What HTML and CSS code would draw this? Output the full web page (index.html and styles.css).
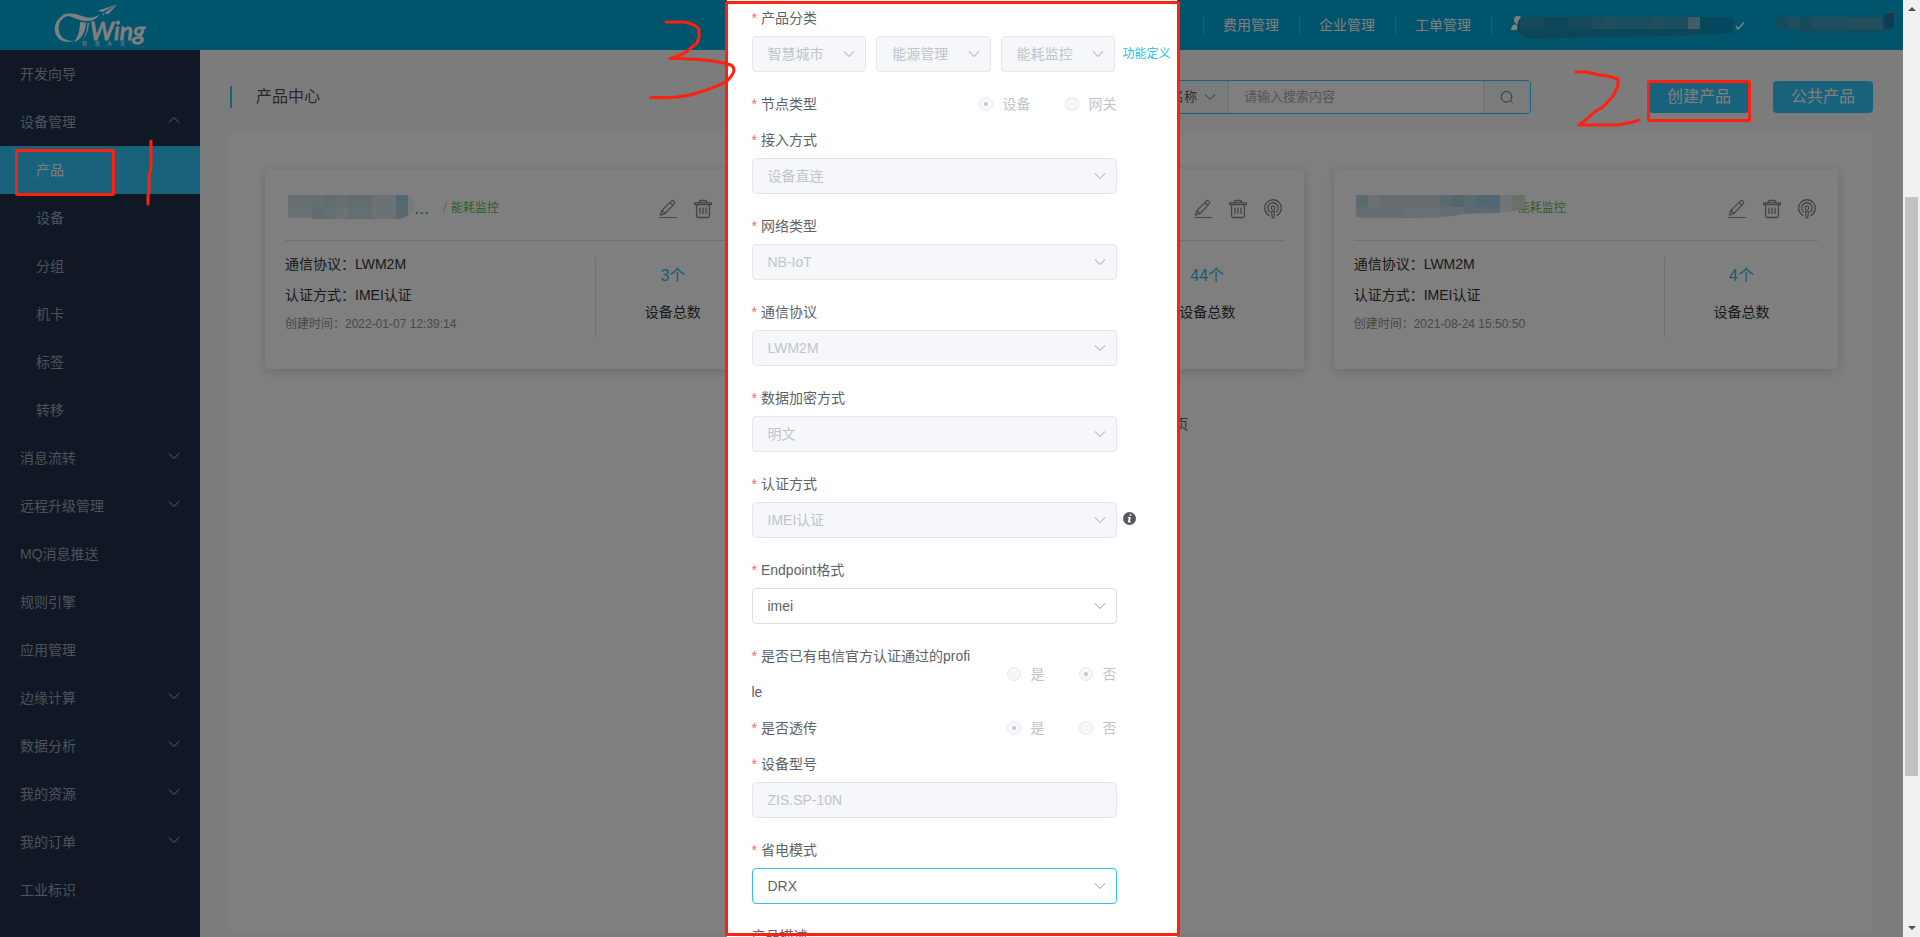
FILE: index.html
```
<!DOCTYPE html>
<html lang="zh-CN">
<head>
<meta charset="utf-8">
<title>产品中心</title>
<link rel="stylesheet" href="styles.css">
</head>
<body>
<svg class="sprite" aria-hidden="true">
  <symbol id="down" viewBox="0 0 12 12"><path d="M1 3.500 6 8.500 11 3.500" fill="none" stroke="currentColor" stroke-width="1.200"/></symbol>
  <symbol id="up" viewBox="0 0 12 12"><path d="M1 8.500 6 3.500 11 8.500" fill="none" stroke="currentColor" stroke-width="1.200"/></symbol>
  <symbol id="edit" viewBox="0 0 18 19"><path d="M1.500 15.500 2.800 11 12.600 1.400Q13.400.6 14.400 1.400L15.400 2.300Q16.200 3.200 15.400 4.100L6 14ZM2.800 11 6 14M11 3 14 5.800M.3 18H17.700" fill="none" stroke="currentColor" stroke-width="1.200"/></symbol>
  <symbol id="trash" viewBox="0 0 18 19"><path d="M.5 3.400H17.500V5.200H.5ZM5 3.200Q5.200 1 7 1H11Q12.800 1 13 3.200M2.600 5.400V16.500Q2.600 18 4 18H14Q15.400 18 15.400 16.500V5.400M6 8V14.500M9 8V14.500M12 8V14.500" fill="none" stroke="currentColor" stroke-width="1.300"/></symbol>
  <symbol id="cast" viewBox="0 0 18 20"><path d="M5.500 16.600A8.300 8.300 0 1 1 12.500 16.600M6 13.200A5.200 5.200 0 1 1 12 13.200" fill="none" stroke="currentColor" stroke-width="1.300"/><circle cx="9" cy="9" r="1.800" fill="none" stroke="currentColor" stroke-width="1.200"/><path d="M7.500 12.500H10.500L9.900 18Q9 20.500 8.100 18Z" fill="none" stroke="currentColor" stroke-width="1.200"/></symbol>
</svg>

<div class="window">
  <div class="app">
    <header class="topbar">
      <a class="logo" href="#" aria-label="CTWing">
        <svg width="110" height="50" viewBox="0 0 110 50">
          <path d="M38 17.500C31 12 20 12.500 14.500 19C8 27 10.500 37 17.500 40.500C22 42.500 27.500 42.300 31 40.500C24 41.500 18.500 39.500 16 34C13 27 15 20.500 21 17C25 15 29.500 15.500 34 18Z" fill="#fff"/>
          <path d="M17 15.500C26 11.500 33 14.500 41 17C47 18.500 51 17.500 56 14.500C52 19.500 47 21.500 41 21C34 20.500 27 14.500 17 15.500Z" fill="#fff"/>
          <path d="M36 22 42 22.500C41.500 32 38 39 30 42.500C34 37 36 30 36 22ZM43.500 22.700H45C44.500 31 42 36.500 38 40.500C42 35 43.200 29 43.500 22.700Z" fill="#fff"/>
          <path d="M73 4.500 53.500 10.800 58.500 12ZM73 4.500 60.500 12.800 64 14.500ZM58.700 12.700 59 15.700 61 13.900Z" fill="#fff"/>
          <text class="logo-word" x="46" y="40">Wing</text>
          <text class="logo-note" x="38 51 63 76" y="45">智联未来</text>
        </svg>
      </a>
      <nav class="topnav">
        <a href="#">费用管理</a>
        <a href="#">企业管理</a>
        <a href="#">工单管理</a>
      </nav>
      <svg class="account" width="385" height="30" viewBox="0 0 385 30">
        <g transform="translate(-4 3)">
          <g fill="#fff"><circle cx="12" cy="7" r="4"/><path d="M5 17Q5 12 9 11.500H16V17Z"/></g>
          <path d="M16 4H226V19Q214 22 190 22L120 24Q60 24 30 26Q14 26 11 16Q11 6 16 4Z" fill="#1a8cb2"/>
          <g fill="#4fa4c0"><path d="M14 4H38V16H14ZM62 4H86V16H62Z" opacity=".35"/><path d="M86 4H182V16H86Z" opacity=".6"/><path d="M182 4H194V16H182Z" fill="#80b8cc"/><path d="M98 4H110V16H98ZM146 4H158V16H146Z" opacity=".25"/></g>
          <path d="M196 4H208V22H196ZM208 4H228V20H208Z" fill="#008fba" opacity=".6"/>
          <path d="M230 13 232 16 238 9.500" fill="none" stroke="#fff" stroke-width="1.500"/>
          <path d="M270 4H388V13Q386 17 380 18V20H294V16H270Z" fill="#2896ba"/>
          <path d="M282 4H294V16H282ZM306 4H342V16H306Z" fill="#60a8c0" opacity=".4"/>
          <path d="M342 4H376V16H342Z" fill="#60a8c0" opacity=".55"/>
          <path d="M378 1H388V14Q386 16 378 16Z" fill="#1c7ca6"/><path d="M383 0H388V5Z" fill="#c03a58"/>
        </g>
      </svg>
    </header>

    <div class="columns">
      <aside class="sidebar">
        <a href="#">开发向导</a>
        <a href="#">设备管理<svg><use href="#up"/></svg></a>
        <a href="#" class="sub active">产品</a>
        <a href="#" class="sub">设备</a>
        <a href="#" class="sub">分组</a>
        <a href="#" class="sub">机卡</a>
        <a href="#" class="sub">标签</a>
        <a href="#" class="sub">转移</a>
        <a href="#">消息流转<svg><use href="#down"/></svg></a>
        <a href="#">远程升级管理<svg><use href="#down"/></svg></a>
        <a href="#">MQ消息推送</a>
        <a href="#">规则引擎</a>
        <a href="#">应用管理</a>
        <a href="#">边缘计算<svg><use href="#down"/></svg></a>
        <a href="#">数据分析<svg><use href="#down"/></svg></a>
        <a href="#">我的资源<svg><use href="#down"/></svg></a>
        <a href="#">我的订单<svg><use href="#down"/></svg></a>
        <a href="#">工业标识</a>
      </aside>

      <main class="main">
        <div class="toolbar">
          <h1>产品中心</h1>
          <div class="search">
            <button type="button" class="search-type">产品名称<svg><use href="#down"/></svg></button>
            <input type="text" placeholder="请输入搜索内容" aria-label="搜索内容">
            <button type="button" class="search-go" aria-label="搜索"><svg viewBox="0 0 14 14"><circle cx="6.500" cy="6.800" r="5.300" fill="none" stroke="currentColor"/><path d="M10.300 10.500 12.800 12.800" fill="none" stroke="currentColor"/></svg></button>
          </div>
          <button type="button" class="primary">创建产品</button>
          <button type="button" class="primary">公共产品</button>
        </div>

        <section class="panel">
          <div class="cards">
            <article class="card">
              <div class="card-head">
                <svg class="mosaic" width="132" height="26" viewBox="0 0 132 26">
                  <path d="M120 0Q130 6 126 16Q122 22 114 22H100V0Z" fill="#e6ecee" opacity=".6"/>
                  <path d="M0 0H120V20Q116 24 108 24H24V23H0Z" fill="#d6e3ea"/>
                  <path d="M0 0H12V12H0ZM36 12H48V24H36Z" fill="#c8dee8"/>
                  <path d="M12 0H36V12H12ZM48 0H60V12H48ZM60 12H84V24H60Z" fill="#cbdde6"/>
                  <path d="M36 0H48V12H36ZM60 0H84V12H60ZM24 12H36V24H24Z" fill="#c2d7e0"/>
                  <path d="M108 0H120V12H108Z" fill="#a6d2e6"/><path d="M108 12H120V20Q116 24 108 24Z" fill="#b8d0da"/>
                </svg>
                <span class="dots">...</span><span class="slash">/</span><span class="tag">能耗监控</span>
                <div class="tools"><button type="button" aria-label="编辑"><svg><use href="#edit"/></svg></button><button type="button" aria-label="删除"><svg><use href="#trash"/></svg></button><button type="button" aria-label="订阅"><svg><use href="#cast"/></svg></button></div>
              </div>
              <div class="card-body">
                <div class="facts"><p>通信协议：LWM2M</p><p>认证方式：IMEI认证</p><p class="time">创建时间：2022-01-07 12:39:14</p></div>
                <div class="total"><b>3个</b><span>设备总数</span></div>
              </div>
            </article>
            <article class="card">
              <div class="card-head">
                <div class="tools"><button type="button" aria-label="编辑"><svg><use href="#edit"/></svg></button><button type="button" aria-label="删除"><svg><use href="#trash"/></svg></button><button type="button" aria-label="订阅"><svg><use href="#cast"/></svg></button></div>
              </div>
              <div class="card-body">
                <div class="facts"></div>
                <div class="total"><b>44个</b><span>设备总数</span></div>
              </div>
            </article>
            <article class="card">
              <div class="card-head">
                <svg class="mosaic wide" width="170" height="26" viewBox="0 0 170 26">
                  <path d="M0 0H144V18L108 19Q90 23 60 23H6Q0 23 0 20Z" fill="#cddbe4"/>
                  <path d="M12 0H24V12H12ZM48 12H84V22H48Z" fill="#d4e0e8"/>
                  <path d="M0 0H12V12H0ZM84 0H96V12H84ZM108 12H144V18H108Z" fill="#b8d2de"/>
                  <path d="M96 0H108V12H96ZM120 0H132V12H120Z" fill="#a4ccda"/>
                  <path d="M108 0H120V12H108Z" fill="#b4d4e0"/>
                  <path d="M132 0H144V12H132Z" fill="#a0d0e6"/>
                  <path d="M144 0H156V17H144Z" fill="#e6e9eb"/>
                  <path d="M156 0H169V12Q166 16 156 16Z" fill="#d6e0d2"/>
                </svg>
                <span class="tag">能耗监控</span>
                <div class="tools"><button type="button" aria-label="编辑"><svg><use href="#edit"/></svg></button><button type="button" aria-label="删除"><svg><use href="#trash"/></svg></button><button type="button" aria-label="订阅"><svg><use href="#cast"/></svg></button></div>
              </div>
              <div class="card-body">
                <div class="facts"><p>通信协议：LWM2M</p><p>认证方式：IMEI认证</p><p class="time">创建时间：2021-08-24 15:50:50</p></div>
                <div class="total"><b>4个</b><span>设备总数</span></div>
              </div>
            </article>
          </div>
          <div class="pager">页</div>
        </section>
      </main>
    </div>

    <div class="mask">
      <form class="dialog">
        <fieldset class="field">
          <legend class="label req">产品分类</legend>
          <div class="triple">
            <div class="select"><select disabled aria-label="一级分类"><option>智慧城市</option></select><svg><use href="#down"/></svg></div>
            <div class="select"><select disabled aria-label="二级分类"><option>能源管理</option></select><svg><use href="#down"/></svg></div>
            <div class="select"><select disabled aria-label="三级分类"><option>能耗监控</option></select><svg><use href="#down"/></svg></div>
            <a class="aside" href="#">功能定义</a>
          </div>
        </fieldset>
        <div class="inline" role="radiogroup" aria-labelledby="node">
          <span class="label req" id="node">节点类型</span>
          <div class="radios"><label><input type="radio" name="node" checked disabled>设备</label><label><input type="radio" name="node" disabled>网关</label></div>
        </div>
        <div class="field">
          <label class="label req" for="access">接入方式</label>
          <div class="select"><select id="access" disabled><option>设备直连</option></select><svg><use href="#down"/></svg></div>
        </div>
        <div class="field">
          <label class="label req" for="net">网络类型</label>
          <div class="select"><select id="net" disabled><option>NB-IoT</option></select><svg><use href="#down"/></svg></div>
        </div>
        <div class="field">
          <label class="label req" for="proto">通信协议</label>
          <div class="select"><select id="proto" disabled><option>LWM2M</option></select><svg><use href="#down"/></svg></div>
        </div>
        <div class="field">
          <label class="label req" for="crypt">数据加密方式</label>
          <div class="select"><select id="crypt" disabled><option>明文</option></select><svg><use href="#down"/></svg></div>
        </div>
        <div class="field">
          <label class="label req" for="auth">认证方式</label>
          <div class="select"><select id="auth" disabled><option>IMEI认证</option></select><svg><use href="#down"/></svg>
            <svg class="aside info" viewBox="0 0 13 13"><circle cx="6.500" cy="6.500" r="6.500" fill="#55585e"/><path d="M6.800 2.200H8.400L8.100 3.800H6.500ZM5 5H7.800L6.900 9.500H8L7.800 10.500H4.800L5.700 6H4.800Z" fill="#fff"/></svg>
          </div>
        </div>
        <div class="field">
          <label class="label req" for="endpoint">Endpoint格式</label>
          <div class="select"><select id="endpoint"><option>imei</option></select><svg><use href="#down"/></svg></div>
        </div>
        <div class="inline" role="radiogroup" aria-labelledby="profile">
          <span class="label req" id="profile">是否已有电信官方认证通过的profile</span>
          <div class="radios"><label><input type="radio" name="profile" disabled>是</label><label><input type="radio" name="profile" checked disabled>否</label></div>
        </div>
        <div class="inline" role="radiogroup" aria-labelledby="pass">
          <span class="label req" id="pass">是否透传</span>
          <div class="radios"><label><input type="radio" name="pass" checked disabled>是</label><label><input type="radio" name="pass" disabled>否</label></div>
        </div>
        <div class="field">
          <label class="label req" for="model">设备型号</label>
          <input class="text" id="model" type="text" value="ZIS.SP-10N" disabled>
        </div>
        <div class="field">
          <label class="label req" for="power">省电模式</label>
          <div class="select"><select id="power" class="current"><option>DRX</option></select><svg><use href="#down"/></svg></div>
        </div>
        <div class="field">
          <label class="label" for="desc">产品描述</label>
          <textarea class="text" id="desc"></textarea>
        </div>
      </form>
    </div>
  </div>
  <div class="scrollbar" aria-hidden="true"><i class="arrow-up"></i><i class="thumb"></i><i class="arrow-down"></i></div>
</div>

<svg class="marks" width="1920" height="937" viewBox="0 0 1920 937" aria-hidden="true">
  <rect x="16.500" y="150.500" width="97" height="44" rx="1"/>
  <rect x="1648.500" y="81.500" width="101" height="39" rx="1"/>
  <rect x="726.500" y="2.500" width="452" height="932" rx="1"/>
  <path d="M151 141V168L149 176V192L148 196V204"/>
  <path d="M666 22H683Q692 23 697 27L699 30V37L697 43L686 52Q680 56 670 58.500C690 59 712 59 731 65Q734 67 734 70Q734 74 727 81Q718 87 690 95Q676 98 651 97.500"/>
  <path d="M1576 72H1587L1599 75L1608 76L1618 79V86L1613 96L1603 107L1596 111L1587 119L1579 125H1617L1633 122L1639 120"/>
</svg>
</body>
</html>
```
FILE: styles.css
```
* { box-sizing: border-box; }
body {
  margin: 0;
  font: 14px/20px "Liberation Sans", "Noto Sans CJK SC", sans-serif;
  color: #606266;
  overflow: hidden;
}
a { color: inherit; text-decoration: none; }
button, input, select, textarea { font: inherit; color: inherit; margin: 0; }
button { border: 0; background: none; padding: 0; }
h1, p { margin: 0; font-weight: 400; }
.sprite { display: none; }

.window { display: flex; height: 100vh; }
.app { flex: 1; min-width: 0; display: flex; flex-direction: column; position: relative; overflow: hidden; }
.scrollbar { width: 17px; background: #f0f0f0; display: grid; grid-template-rows: 197px 579px 1fr; justify-items: center; }
.scrollbar .thumb { width: 13px; background: #c1c1c1; }
.arrow-up, .arrow-down { width: 0; border: 4px solid transparent; height: 0; }
.arrow-up { border-top: 0; border-bottom-color: #505050; margin-top: 7px; }
.arrow-down { border-bottom: 0; border-top-color: #505050; align-self: end; margin-bottom: 7px; }

.topbar { flex: none; height: 50px; background: #00a9d9; color: #fff; display: flex; align-items: center; padding-right: 8px; }
.logo { margin-left: 44px; margin-right: auto; display: flex; }
.logo-word { font: italic 400 25px Lato, sans-serif; fill: #fff; stroke: #fff; stroke-width: 1px; }
.logo-note { font: 5px "Noto Sans CJK SC", sans-serif; fill: #fff; }
.topnav { display: flex; }
.topnav a { padding: 0 20px 0 19px; border-left: 1px solid #3fb9dc; }
.topnav a:last-child { border-right: 1px solid #3fb9dc; }
.account { margin-left: 18px; overflow: visible; }

.columns { flex: 1; display: flex; min-height: 0; }
.sidebar { width: 200px; flex: none; background: #20304a; color: #9aa6b6; }
.sidebar a { display: flex; align-items: center; justify-content: space-between; height: 48px; padding: 0 20px; }
.sidebar .sub { padding-left: 36px; }
.sidebar .active { background: #30c6f6; color: #fff; }
.sidebar svg { width: 12px; height: 12px; margin-bottom: 4px; color: #7c8898; }

.main { flex: 1; min-width: 0; background: #f8f8f8; padding: 0 30px 3px; display: flex; flex-direction: column; }
.toolbar { height: 84px; display: flex; align-items: center; padding-top: 10px; flex: none; }
.toolbar h1 { font-size: 16px; line-height: 22px; border-left: 2px solid #30c6f6; padding-left: 24px; margin-right: auto; color: #555; }
.primary { width: 100px; height: 32px; border-radius: 4px; background: #30c6f6; color: #fff; font-size: 16px; }
.primary + .primary { margin-left: 24px; }
.search { display: flex; width: 402px; height: 34px; border: 1px solid #30c6f6; border-radius: 4px; margin-right: 118px; font-size: 13px; background: #fff; overflow: hidden; }
.search-type { width: 99px; display: flex; align-items: center; justify-content: flex-end; gap: 7px; padding-right: 12px; background: #f5f7fa; border-right: 1px solid #dcdfe6; }
.search-type svg { width: 12px; height: 12px; color: #a0a4aa; }
.search input { flex: 1; min-width: 0; border: 0; background: #fff; padding: 0 15px; }
.search input::placeholder { color: #a8abb2; opacity: 1; }
.search-go { width: 47px; background: #f5f7fa; border-left: 1px solid #dcdfe6; display: flex; align-items: center; justify-content: center; }
.search-go svg { width: 14px; height: 14px; }

.panel { flex: 1; background: #fff; padding: 35px; }
.cards { display: grid; grid-template-columns: repeat(3, minmax(0, 1fr)); gap: 30px; }
.card { height: 200px; padding: 0 20px; border-radius: 4px; background: #fff; box-shadow: 0 2px 12px rgba(0, 0, 0, .16); }
.card-head { height: 72px; display: flex; align-items: center; padding-top: 6px; border-bottom: 1px solid #e0e0e0; }
.mosaic { flex: none; position: relative; margin-left: 3px; }
.mosaic.wide { margin-left: 2px; margin-right: -8px; }
.dots { color: #2a9fd0; font-size: 18px; margin-left: -6px; }
.slash { color: #ccc; margin-left: 14px; margin-right: 4px; }
.tag { color: #67b850; font-size: 12px; }
.tools { margin-left: auto; margin-right: 2px; margin-top: 2px; display: flex; gap: 17px; color: #888; }
.tools button { display: flex; }
.tools svg { width: 18px; height: 20px; }
.card-body { display: flex; }
.facts { flex: 1; padding-top: 8px; color: #333; }
.facts p { line-height: 31px; }
.facts .time { font-size: 12px; line-height: 27px; color: #909090; }
.total { width: 154px; height: 80px; margin-top: 16px; border-left: 1px solid #e0e0e0; display: flex; flex-direction: column; text-align: center; color: #333; }
.total b { font-size: 16px; font-weight: 400; line-height: 38px; color: #30b6e6; }
.total span { line-height: 34px; }
.pager { padding-top: 45px; text-align: center; padding-left: 260px; color: #606266; }

.mask { position: absolute; inset: 0; background: rgba(0, 0, 0, .5); }
.dialog { width: 450px; height: 100%; overflow: hidden; margin: 0 auto; padding: 0 60px 0 25px; background: #fff; }
.label { display: block; padding: 0; line-height: 36px; word-break: break-all; }
.req::before { content: "*"; color: #f56c6c; margin-right: 4px; }
.field { margin: 0 0 14px; padding: 0; border: 0; min-width: 0; }
.inline { display: flex; align-items: center; justify-content: space-between; }
.inline .label { flex: 0 1 219px; }
.radios { display: flex; gap: 34px; color: #c0c4cc; white-space: nowrap; }
.radios label { display: flex; align-items: center; gap: 10px; }
.radios input { appearance: none; width: 14px; height: 14px; border: 1px solid #e4e7ed; border-radius: 50%; background: #f5f7fa; display: grid; place-items: center; }
.radios input:checked::before { content: ""; width: 4px; height: 4px; border-radius: 50%; background: #c0c4cc; }
.select { display: grid; align-items: center; position: relative; }
.select > * { grid-area: 1 / 1; }
.select select, .text {
  appearance: none;
  width: 100%;
  height: 36px;
  padding: 0 15px;
  border: 1px solid #dcdfe6;
  border-radius: 4px;
  background: #fff;
  outline: 0;
  opacity: 1;
}
.select select:disabled, .text:disabled { background: #f5f7fa; border-color: #e4e7ed; color: #c0c4cc; }
.select .current { border-color: #30c0f0; }
.select > svg { width: 12px; height: 12px; justify-self: end; margin-right: 11px; color: #c0c4cc; pointer-events: none; }
.triple { display: grid; grid-template-columns: repeat(3, minmax(0, 1fr)); gap: 10px; padding-right: 1px; position: relative; }
.aside { position: absolute; left: 100%; margin-left: 6px; white-space: nowrap; }
a.aside { font-size: 12px; line-height: 36px; color: #30c0f0; }
.select > svg.info { width: 13px; height: 13px; margin: 0 0 3px 6px; }

.marks { position: absolute; left: 0; top: 0; pointer-events: none; fill: none; stroke: #ff2010; stroke-width: 3px; stroke-linecap: round; stroke-linejoin: round; }
```
